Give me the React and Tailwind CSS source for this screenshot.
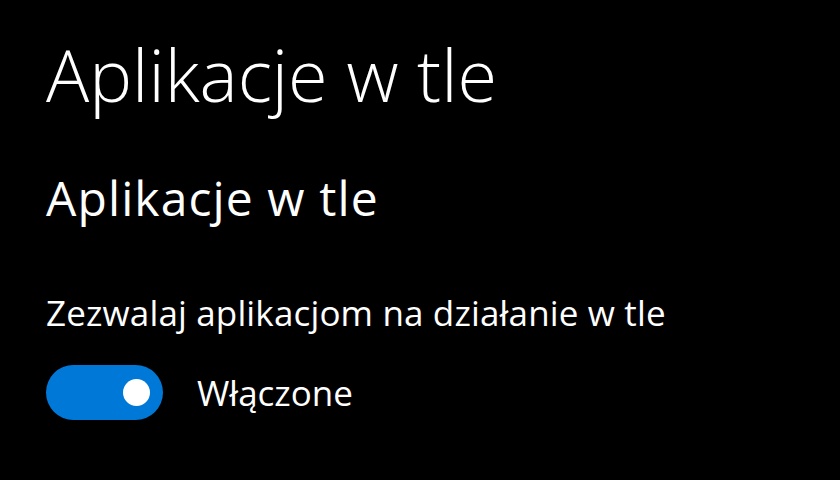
import React, { useState } from 'react';

const Toggle = ({ on, onChange }) => (
  <button
    type="button"
    onClick={() => onChange(!on)}
    className={`flex h-[55px] w-[117px] items-center rounded-full px-[13px] ${
      on ? 'justify-end bg-[#0078d7]' : 'justify-start border-[5px] border-white bg-transparent'
    }`}
  >
    <span className="block h-[27px] w-[27px] rounded-full bg-white" />
  </button>
);

const App = () => {
  const [enabled, setEnabled] = useState(true);

  return (
    <div className="h-[480px] w-[840px] overflow-hidden bg-black pl-[46px] text-white [font-family:'Open_Sans',sans-serif]">
      <h1 className="mt-[34px] text-[72px] font-light leading-[80px]">Aplikacje w tle</h1>
      <h2 className="mt-[54px] text-[48px] leading-[60px] tracking-[1.1px]">Aplikacje w tle</h2>
      <p className="mt-[65px] text-[35px] leading-[40px] tracking-[0.15px]">Zezwalaj aplikacjom na działanie w tle</p>
      <div className="mt-[32px] flex items-center gap-[34px]">
        <Toggle on={enabled} onChange={setEnabled} />
        <span className="text-[35px] leading-[40px]">{enabled ? 'Włączone' : 'Wyłączone'}</span>
      </div>
    </div>
  );
};

export default App;
